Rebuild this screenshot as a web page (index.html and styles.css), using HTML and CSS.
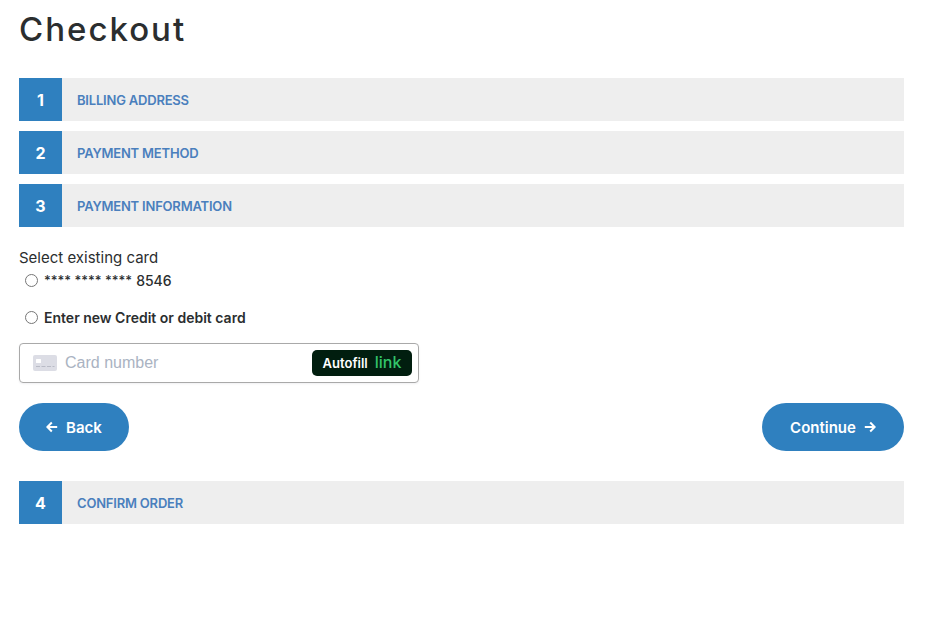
FILE: index.html
```html
<!DOCTYPE html>
<html lang="en">
<head>
<meta charset="utf-8">
<title>Checkout</title>
<link rel="stylesheet" href="styles.css">
</head>
<body>
<main class="page">
  <h1 class="title">Checkout</h1>
  <section class="steps">
    <div class="step"><span class="step-num">1</span><span class="step-label">BILLING ADDRESS</span></div>
    <div class="step"><span class="step-num">2</span><span class="step-label">PAYMENT METHOD</span></div>
    <div class="step"><span class="step-num">3</span><span class="step-label">PAYMENT INFORMATION</span></div>
  </section>
  <section class="payment">
    <p class="select-label">Select existing card</p>
    <label class="radio-row radio-existing"><input type="radio" name="card"><span class="card-mask">**** **** ****</span> <span class="card-last">8546</span></label>
    <label class="radio-row radio-new"><input type="radio" name="card"><span class="new-card">Enter new Credit or debit card</span></label>
    <div class="card-field">
      <svg class="card-icon" width="24" height="16" viewBox="0 0 24 16" aria-hidden="true">
        <rect width="24" height="16" rx="2" fill="#dcdde5"/>
        <rect x="3" y="4" width="5" height="4" rx="0.5" fill="#fff"/>
        <path d="M3 11.5h4M8.5 11.5h4M14 11.5h4M19.500 11.500h2" stroke="#b9bbc6" stroke-width="1"/>
      </svg>
      <span class="card-placeholder">Card number</span>
      <span class="autofill"><span class="autofill-text">Autofill</span><span class="autofill-link">link</span></span>
    </div>
    <div class="actions">
      <button class="btn" type="button">
        <svg class="arrow" width="12" height="12" viewBox="0 0 12 12" aria-hidden="true"><path d="M11.200 6H1.500M5.800 1.500 1.300 6l4.500 4.500" fill="none" stroke="#fff" stroke-width="2"/></svg>
        Back
      </button>
      <button class="btn btn-continue" type="button">
        Continue
        <svg class="arrow" width="12" height="12" viewBox="0 0 12 12" aria-hidden="true"><path d="M.8 6h9.700M6.200 1.500 10.700 6l-4.500 4.500" fill="none" stroke="#fff" stroke-width="2"/></svg>
      </button>
    </div>
  </section>
  <div class="step"><span class="step-num">4</span><span class="step-label">CONFIRM ORDER</span></div>
</main>
</body>
</html>
```
FILE: styles.css
```css
* { box-sizing: border-box; }
html, body { margin: 0; background: #fff; }
body { font-family: Inter, "Liberation Sans", sans-serif; color: #2b2e2f; }
.page { width: 904px; padding: 10px 0 0 19px; }
.title {
  margin: 0 0 29px;
  font-size: 33px;
  line-height: 39px;
  font-weight: 500;
  letter-spacing: 2px;
}
.steps { display: flex; flex-direction: column; gap: 10px; }
.step { display: flex; align-items: center; height: 43px; background: #eeeeee; }
.step-num {
  width: 43px;
  height: 43px;
  display: flex;
  align-items: center;
  justify-content: center;
  background: #2f80bf;
  color: #fff;
  font-size: 16px;
  font-weight: 700;
}
.step-label { margin-left: 15px; font-size: 13px; font-weight: 600; color: #4a7fbd; letter-spacing: -0.2px; }
.payment { padding-top: 21px; }
.select-label { margin: 0; font-size: 15px; line-height: 20px; letter-spacing: 0; }
.radio-row { display: flex; align-items: center; height: 20px; padding-left: 6px; font-size: 14px; }
.radio-row input { margin: 0 6px 0 0; width: 13px; height: 13px; }
.radio-existing { margin-top: 4px; height: 16px; font-weight: 500; }
.card-mask { font-size: 13px; margin-right: 4px; }
.radio-new { margin-top: 19px; font-weight: 600; }
.card-field {
  display: flex;
  align-items: center;
  width: 400px;
  height: 40px;
  margin-top: 16px;
  padding: 0 6px 0 13px;
  border: 1px solid #a9a9a9;
  border-radius: 4px;
  box-shadow: 0 1px 2px rgba(60, 66, 87, .08);
}
.card-icon { flex: none; }
.card-placeholder { margin-left: 8px; font-family: "Liberation Sans", sans-serif; font-size: 16px; color: #aab3c2; }
.autofill {
  margin-left: auto;
  display: flex;
  align-items: center;
  justify-content: center;
  gap: 7px;
  width: 100px;
  height: 26px;
  background: #011e0f;
  border-radius: 5px;
}
.autofill-text { color: #fff; font-size: 13px; font-weight: 600; }
.autofill-link { color: #33c56a; font-size: 16px; font-weight: 500; position: relative; top: -1px; }
.actions { display: flex; justify-content: space-between; margin: 20px 0 30px; }
.btn {
  display: flex;
  align-items: center;
  justify-content: center;
  gap: 8px;
  width: 110px;
  height: 48px;
  border: 0;
  border-radius: 24px;
  background: #2f80bf;
  color: #fff;
  font-family: inherit;
  font-size: 15px;
  font-weight: 600;
}
.btn-continue { width: 142px; }
```
